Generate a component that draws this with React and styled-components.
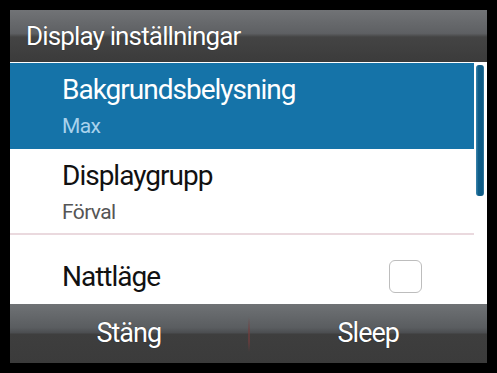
import React from 'react';
import styled, { createGlobalStyle } from 'styled-components';

const GlobalStyle = createGlobalStyle`
  html, body {
    margin: 0;
    padding: 0;
    background: #000;
  }
  body {
    font-family: Roboto, 'Open Sans', sans-serif;
  }
`;

const Frame = styled.div`
  width: 497px;
  height: 373px;
  box-sizing: border-box;
  padding: 10px;
  background: #000;
`;

const Screen = styled.div`
  display: flex;
  flex-direction: column;
  width: 477px;
  height: 353px;
  background: #fff;
  overflow: hidden;
`;

const Header = styled.header`
  height: 52px;
  flex: none;
  padding-left: 16px;
  background: linear-gradient(180deg, #717376 0%, #5e6063 45%, #444 52%, #3b3b3b 100%);
  color: #fff;
  font-size: 26px;
  letter-spacing: -0.85px;
  line-height: 52px;
  text-shadow: 0 0 1px rgba(0,0,0,.6);
`;

const Body = styled.div`
  flex: 1;
  display: flex;
  min-height: 0;
  padding-top: 1px;
  overflow: hidden;
`;

const List = styled.div`
  flex: 1;
  display: flex;
  flex-direction: column;
`;

const Item = styled.div`
  flex: none;
  height: ${(p) => p.h}px;
  display: flex;
  align-items: ${(p) => (p.toggle ? 'center' : 'flex-start')};
  justify-content: space-between;
  box-sizing: border-box;
  padding: ${(p) => (p.toggle ? '0 52px 0 52px' : '8px 0 0 52px')};
  background: ${(p) => (p.active ? '#1573a8' : '#fff')};
  border-bottom: ${(p) => (p.divider ? '2px solid #ead9de' : 'none')};
`;

const Texts = styled.div`
  display: flex;
  flex-direction: column;
`;

const Title = styled.div`
  font-size: 28px;
  letter-spacing: -1px;
  line-height: 38px;
  color: ${(p) => (p.active ? '#fff' : '#111')};
`;

const Sub = styled.div`
  font-size: 21px;
  letter-spacing: -0.6px;
  line-height: 34px;
  color: ${(p) => (p.active ? '#a9d2ec' : '#555')};
`;

const Check = styled.div`
  width: 31px;
  height: 31px;
  border: 1.5px solid #bdbdbd;
  border-radius: 6px;
`;

const Track = styled.div`
  width: 13px;
  flex: none;
  padding: 2px 0 0 2px;
  box-sizing: border-box;
`;

const Thumb = styled.div`
  width: 8px;
  height: 131px;
  border-radius: 3px;
  background: linear-gradient(90deg, #3d86ae 0%, #0f5f8a 30%, #0e5a84 80%, #3a7fa4 100%);
`;

const Footer = styled.footer`
  height: 59px;
  flex: none;
  display: flex;
  align-items: flex-start;
  background: linear-gradient(180deg, #6f7275 0%, #5a5d60 40%, #4b4d50 49%, #3e3e3e 51%, #3b3b3b 100%);
`;

const FootButton = styled.div`
  flex: 1;
  text-align: center;
  color: #fff;
  font-size: 27px;
  letter-spacing: -1px;
  line-height: 58px;
  text-shadow: 0 0 1px rgba(0,0,0,.6);
`;

const FootDivider = styled.div`
  width: 2px;
  height: 35px;
  margin-top: 13px;
  background: linear-gradient(180deg, rgba(120,60,60,0) 0%, rgba(120,60,60,.6) 40%, rgba(120,60,60,.6) 70%, rgba(120,60,60,0) 100%);
`;

export default function App() {
  return (
    <Frame>
      <GlobalStyle />
      <Screen>
        <Header>Display inställningar</Header>
        <Body>
          <List>
            <Item h={86} active>
              <Texts>
                <Title active>Bakgrundsbelysning</Title>
                <Sub active>Max</Sub>
              </Texts>
            </Item>
            <Item h={86} divider>
              <Texts>
                <Title>Displaygrupp</Title>
                <Sub>Förval</Sub>
              </Texts>
            </Item>
            <Item h={83} toggle>
              <Title>Nattläge</Title>
              <Check />
            </Item>
          </List>
          <Track>
            <Thumb />
          </Track>
        </Body>
        <Footer>
          <FootButton>Stäng</FootButton>
          <FootDivider />
          <FootButton>Sleep</FootButton>
        </Footer>
      </Screen>
    </Frame>
  );
}
